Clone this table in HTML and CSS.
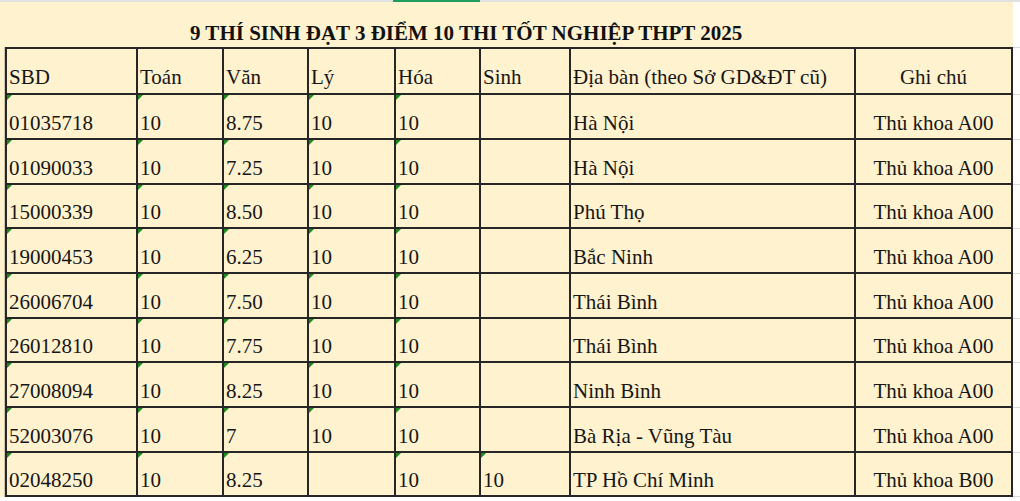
FILE: index.html
```html
<!DOCTYPE html>
<html lang="vi">
<head>
<meta charset="utf-8">
<title>9 thí sinh đạt 3 điểm 10</title>
<link rel="stylesheet" href="styles.css">
</head>
<body>
<div class="topbar"><span class="tab-green"></span></div>
<div class="sheet-row">
  <div class="sheet">
    <div class="title">9 THÍ SINH ĐẠT 3 ĐIỂM 10 THI TỐT NGHIỆP THPT 2025</div>
    <div class="body-row">
      <div class="gutter"></div>
      <div class="grid">
        <div class="c h">SBD</div><div class="c h">Toán</div><div class="c h">Văn</div><div class="c h">Lý</div><div class="c h">Hóa</div><div class="c h">Sinh</div><div class="c h">Địa bàn (theo Sở GD&amp;ĐT cũ)</div><div class="c h ctr">Ghi chú</div>

        <div class="c t">01035718</div><div class="c t">10</div><div class="c t">8.75</div><div class="c t">10</div><div class="c t">10</div><div class="c"></div><div class="c">Hà Nội</div><div class="c ctr">Thủ khoa A00</div>

        <div class="c t">01090033</div><div class="c t">10</div><div class="c t">7.25</div><div class="c t">10</div><div class="c t">10</div><div class="c"></div><div class="c">Hà Nội</div><div class="c ctr">Thủ khoa A00</div>

        <div class="c t">15000339</div><div class="c t">10</div><div class="c t">8.50</div><div class="c t">10</div><div class="c t">10</div><div class="c"></div><div class="c">Phú Thọ</div><div class="c ctr">Thủ khoa A00</div>

        <div class="c t">19000453</div><div class="c t">10</div><div class="c t">6.25</div><div class="c t">10</div><div class="c t">10</div><div class="c"></div><div class="c">Bắc Ninh</div><div class="c ctr">Thủ khoa A00</div>

        <div class="c t">26006704</div><div class="c t">10</div><div class="c t">7.50</div><div class="c t">10</div><div class="c t">10</div><div class="c"></div><div class="c">Thái Bình</div><div class="c ctr">Thủ khoa A00</div>

        <div class="c t">26012810</div><div class="c t">10</div><div class="c t">7.75</div><div class="c t">10</div><div class="c t">10</div><div class="c"></div><div class="c">Thái Bình</div><div class="c ctr">Thủ khoa A00</div>

        <div class="c t">27008094</div><div class="c t">10</div><div class="c t">8.25</div><div class="c t">10</div><div class="c t">10</div><div class="c"></div><div class="c">Ninh Bình</div><div class="c ctr">Thủ khoa A00</div>

        <div class="c t">52003076</div><div class="c t">10</div><div class="c t">7</div><div class="c t">10</div><div class="c t">10</div><div class="c"></div><div class="c">Bà Rịa - Vũng Tàu</div><div class="c ctr">Thủ khoa A00</div>

        <div class="c t">02048250</div><div class="c t">10</div><div class="c t">8.25</div><div class="c"></div><div class="c t">10</div><div class="c t">10</div><div class="c">TP Hồ Chí Minh</div><div class="c ctr">Thủ khoa B00</div>
      </div>
    </div>
  </div>
  <div class="filler">
    <div class="fs f-title"></div>
    <div class="fs f-head"></div>
    <div class="fs r45"></div><div class="fs r45"></div><div class="fs r44"></div>
    <div class="fs r45"></div><div class="fs r45"></div><div class="fs r44"></div>
    <div class="fs r45"></div><div class="fs r45"></div><div class="fs r44"></div>
  </div>
</div>
</body>
</html>
```

FILE: styles.css
```css
* { box-sizing: border-box; }

html, body {
  margin: 0;
  padding: 0;
  background: #ffffff;
  width: 1020px;
  height: 501px;
  overflow: hidden;
  font-family: "Liberation Serif", "Times New Roman", serif;
  color: #161616;
}

.topbar {
  height: 2px;
  background: #e1e1e1;
  display: flex;
}

.tab-green {
  display: block;
  margin-left: 393px;
  width: 87px;
  height: 2px;
  background: #1f9d5c;
}

.sheet-row {
  display: flex;
  align-items: flex-start;
}

.sheet {
  width: 1013px;
  background: #fff2cf;
  display: flex;
  flex-direction: column;
}

.title {
  height: 45px;
  padding-left: 190px;
  padding-top: 21px;
  font-size: 21px;
  font-weight: bold;
  line-height: 21px;
  white-space: nowrap;
  color: #111;
}

.body-row {
  display: flex;
}

.gutter {
  width: 5px;
  border-right: 1px solid #cfc6ad;
}

.grid {
  display: grid;
  grid-template-columns: 131px 86px 85px 87px 85px 90px 285px 157px;
  grid-template-rows: 46px 45px 45px 44px 45px 45px 44px 45px 45px 44px;
  border-top: 2px solid #262626;
  border-left: 2px solid #262626;
}

.c {
  position: relative;
  border-right: 2px solid #262626;
  border-bottom: 2px solid #262626;
  display: flex;
  align-items: flex-end;
  padding: 0 2px 3px 2px;
  font-size: 21px;
  line-height: 23px;
  white-space: nowrap;
}

.c.h {
  padding-bottom: 4px;
}

.c.ctr {
  justify-content: center;
}

.c.t::before {
  content: "";
  position: absolute;
  top: 0;
  left: 0;
  border-top: 5px solid #1c8a1c;
  border-right: 5px solid transparent;
}

.filler {
  width: 7px;
  display: flex;
  flex-direction: column;
}

.fs {
  border-bottom: 1px solid #dadada;
}

.f-title { height: 46px; }
.f-head { height: 47px; }
.r45 { height: 45px; }
.r44 { height: 44px; }
```
